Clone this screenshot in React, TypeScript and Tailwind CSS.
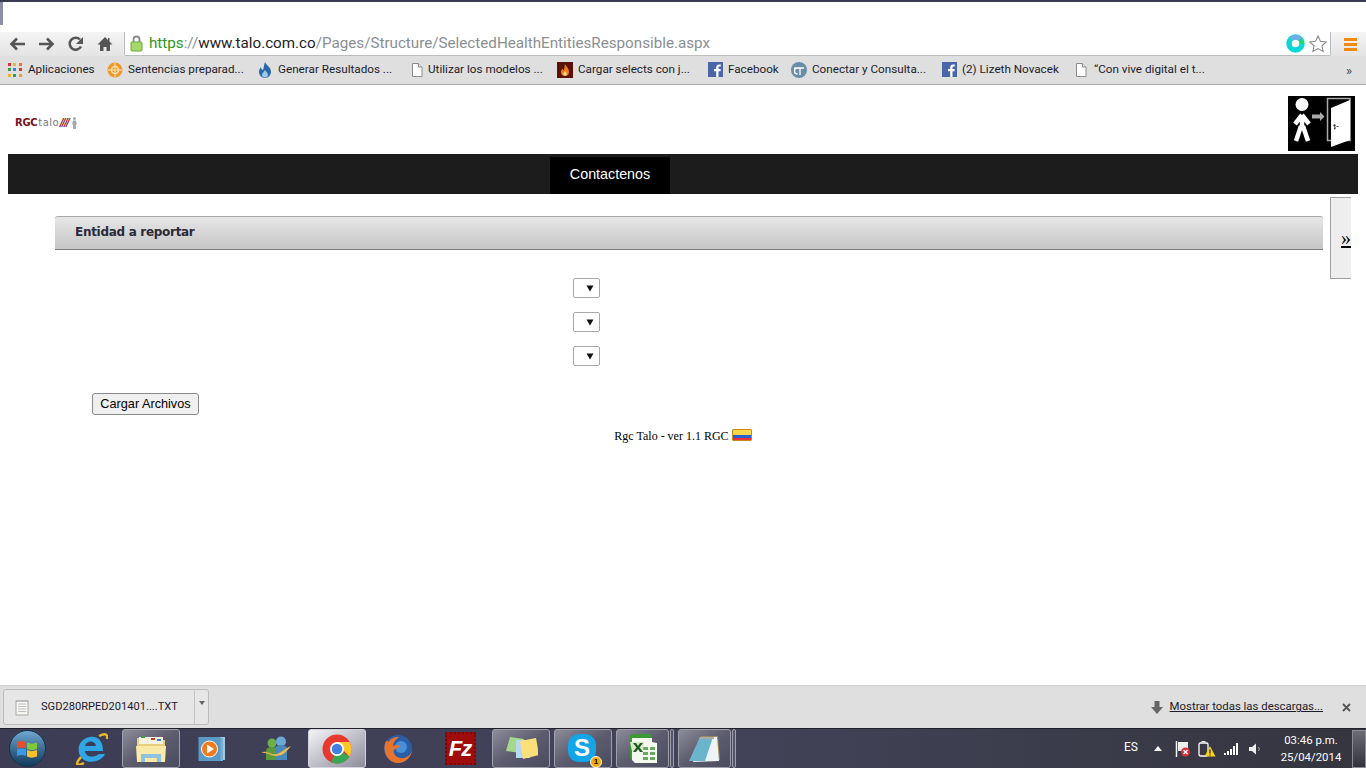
import React from "react";

const uiFont = "font-['Roboto','Noto_Sans',sans-serif]";

const PageIcon = () => (
  <svg width="14" height="16" viewBox="0 0 14 16">
    <path d="M2.5 1.5h6l3.5 3.5v9.500h-9.500z" fill="#fff" stroke="#8a8a8a" />
    <path d="M8.500 1.500v3.500h3.500" fill="#eee" stroke="#8a8a8a" />
  </svg>
);

const FbIcon = () => (
  <svg width="15" height="15" viewBox="0 0 15 15">
    <rect width="15" height="15" fill="#4a66a8" />
    <path d="M10.500 15V9.300h2l.3-2.300h-2.300V5.600c0-.7.3-1.100 1.100-1.100h1.200V2.500c-.4 0-1-.1-1.700-.1-1.800 0-2.900 1.100-2.900 3V7H6v2.300h2.200V15z" fill="#fff" />
  </svg>
);

const AppsIcon = () => {
  const colors = ["#d9352c", "#f1b32b", "#e8742c", "#3a9b4b", "#3a7de0", "#d9352c", "#f1b32b", "#3a9b4b", "#e8a02c"];
  return (
    <div className="grid grid-cols-3 gap-[2px] w-[14px] h-[14px]">
      {colors.map((c, i) => (
        <span key={i} className="w-[3px] h-[3px]" style={{ backgroundColor: c }} />
      ))}
    </div>
  );
};

const bookmarks = [
  { w: "w-[99px]", tx: "", label: "Aplicaciones", icon: <AppsIcon /> },
  {
    w: "w-[151px]",
    tx: "ml-[1px]",
    label: "Sentencias preparad...",
    icon: (
      <svg width="16" height="16" viewBox="0 0 16 16">
        <circle cx="8" cy="8" r="7.500" fill="#f0982a" />
        <circle cx="8" cy="8" r="3.500" fill="none" stroke="#fde3b0" strokeWidth="1.500" />
        <path d="M8 1v14M1 8h14" stroke="#fde3b0" />
      </svg>
    ),
  },
  {
    w: "w-[152px]",
    tx: "",
    label: "Generar Resultados ...",
    icon: (
      <svg width="14" height="16" viewBox="0 0 14 16">
        <path d="M7 0c1 3 6 5 6 10a6 6 0 0 1-12 0c0-2 1-4 2-5 0 2 1 3 2 3 1-3 1-5 2-8z" fill="#2a66a8" />
        <path d="M7 8c1 2 3 3 3 4.500a3 3 0 0 1-6 0C4 11 6 10 7 8z" fill="#9cc8ea" />
      </svg>
    ),
  },
  { w: "w-[147px]", tx: "ml-[-2px]", label: "Utilizar los modelos ...", icon: <PageIcon /> },
  {
    w: "w-[151px]",
    tx: "ml-[1px]",
    label: "Cargar selects con j...",
    icon: (
      <svg width="16" height="16" viewBox="0 0 16 16">
        <rect width="16" height="16" fill="#5a1208" />
        <path d="M8 2c.5 2 4 4 4 8a4 4 0 0 1-8 0c0-1.500.7-2.500 1.500-3.500C5.700 8 6.500 8.500 7 8c.5-2 .5-4 1-6z" fill="#f07a1e" />
        <path d="M8 9c.5 1 1.800 1.500 1.800 3a1.800 1.800 0 0 1-3.600 0c0-1 1.300-1.800 1.800-3z" fill="#fbd78a" />
      </svg>
    ),
  },
  { w: "w-[83px]", tx: "", label: "Facebook", icon: <FbIcon /> },
  {
    w: "w-[151px]",
    tx: "ml-[1px]",
    label: "Conectar y Consulta...",
    icon: (
      <svg width="16" height="16" viewBox="0 0 16 16">
        <circle cx="8" cy="8" r="8" fill="#6a8ea8" />
        <path d="M3 6h10M9 6v7M6.500 6a3 3 0 1 0 0 6" stroke="#fff" strokeWidth="1.300" fill="none" />
      </svg>
    ),
  },
  { w: "w-[132px]", tx: "", label: "(2) Lizeth Novacek", icon: <FbIcon /> },
  { w: "w-[150px]", tx: "", label: "“Con vive digital el t...", icon: <PageIcon /> },
];

const ExitSign = () => (
  <svg width="67" height="55" viewBox="0 0 67 55">
    <rect width="67" height="55" fill="#000" />
    <circle cx="14" cy="8.500" r="6.500" fill="#fff" />
    <path d="M14 19v12M14 19l-7 9M14 19l7 9M13 30L8 45M15 30l5 15" stroke="#fff" strokeWidth="4.500" fill="none" />
    <path d="M24 18.500h8V16l4.500 4.500L32 25v-2.500h-8z" fill="#aaa" />
    <rect x="39.500" y="2.500" width="22.500" height="42" fill="none" stroke="#aaa" strokeWidth="1.500" />
    <path d="M43 12l19-8v40l-19 7z" fill="#fff" />
    <path d="M46 28l2 1-1 2 1 1-1.500 2-.8-2 1-1-1.500-1zM48.500 30h2v1h-2z" fill="#444" />
  </svg>
);

const FlagIcon = () => (
  <div className="w-[20px] h-[12px] flex flex-col border border-[#c58a18] rounded-[1px] overflow-hidden">
    <div className="h-[5px] bg-[#f8d64e]" />
    <div className="h-[3px] bg-[#2a5fd0]" />
    <div className="h-[2px] bg-[#e8343a]" />
  </div>
);

const Select = () => (
  <div className="w-[27px] h-[20px] bg-white border border-[#a9a9a9] rounded-[2px] flex items-center justify-end pr-[5px]">
    <svg width="8" height="8" viewBox="0 0 8 8">
      <path d="M0.500 1.500h7L4 7.500z" fill="#111" />
    </svg>
  </div>
);

const tasks = [
  {
    w: "w-[62px]",
    icon: (
      <svg width="34" height="32" viewBox="0 0 34 32">
        <path d="M28 18H11c.3 5 7 8 14 3h6c-4 9-22 12-26-1-2-8 3-15 11-16 7-1 13 3 13 14zM11 13h11c-.5-6-10-6-11 0z" fill="#2fa6e6" />
        <path d="M7 24C1 31 2 34 10 30M25 3c6-3 9-2 8 3" fill="none" stroke="#e8b62a" strokeWidth="2.500" />
      </svg>
    ),
  },
  {
    w: "w-[58px]",
    pinned: true,
    icon: (
      <svg width="32" height="30" viewBox="0 0 32 30">
        <path d="M2 4h7l2 2h19v22H2z" fill="#e8cf82" />
        <path d="M4 3h24v7H4z" fill="#f7f3e0" />
        <rect x="6" y="2" width="4" height="2" fill="#3a9b4b" />
        <rect x="16" y="4" width="4" height="2" fill="#c8402a" />
        <rect x="22" y="5" width="4" height="2" fill="#3a7de0" />
        <path d="M1 12h30l-1 16H2z" fill="#fbe9a8" />
        <path d="M6 28v-8h20v8h-4v-4H10v4z" fill="#8cc4e0" />
      </svg>
    ),
  },
  {
    w: "w-[64px]",
    icon: (
      <svg width="28" height="26" viewBox="0 0 28 26">
        <rect x="5" y="1" width="22" height="23" fill="#a5c8e0" />
        <rect x="3" y="2" width="22" height="23" fill="#78aed2" />
        <rect x="0.500" y="1" width="22" height="24" fill="#5a9ac6" />
        <circle cx="11.500" cy="13" r="8" fill="#f07a1e" stroke="#fff" />
        <path d="M9 8.500l7 4.500-7 4.500z" fill="#fff" />
      </svg>
    ),
  },
  {
    w: "w-[64px]",
    icon: (
      <svg width="32" height="26" viewBox="0 0 32 26">
        <circle cx="12" cy="7" r="4.500" fill="#6cb04a" />
        <path d="M6 24V15c0-3 3-4 6-4s5 1 5 4v9z" fill="#5a9a3c" />
        <circle cx="21" cy="5.500" r="5" fill="#6aa8d8" />
        <path d="M15 24V13c0-3 3-4 6-4s6 1 6 4v11z" fill="#4a88c0" />
        <path d="M1 17c6-4 10 3 16 1 5-2 9-6 14-8-4 5-8 10-15 10-5 0-9-4-15-3z" fill="#f0b84a" />
      </svg>
    ),
  },
  {
    w: "w-[58px]",
    active: true,
    icon: (
      <svg width="30" height="30" viewBox="0 0 30 30">
        <circle cx="15" cy="15" r="14.500" fill="#e8392e" />
        <path d="M15 15L27.500 22.500A14.500 14.500 0 0 1 9 28.200z" fill="#3aa655" />
        <path d="M15 8h12.500a14.500 14.500 0 0 1 0 14.500L20 15z" fill="#fbc62c" />
        <circle cx="15" cy="15" r="7" fill="#fff" />
        <circle cx="15" cy="15" r="5.300" fill="#3f7fe0" />
      </svg>
    ),
  },
  {
    w: "w-[64px]",
    icon: (
      <svg width="30" height="30" viewBox="0 0 30 30">
        <circle cx="15" cy="15" r="14" fill="#2a5fa8" />
        <circle cx="18" cy="13" r="6" fill="#4a8ed8" />
        <path d="M3 7C-2 18 6 30 16 29c7-.5 12-6 13-12-2 5-7 8-12 7-5-1-7-5-6-8 1-2 4-2 6-3-1-3-5-2-7-1 0-3 2-6 6-9C10 3 7 5 6 8 5 7 4 7 3 7z" fill="#e8742c" />
      </svg>
    ),
  },
  {
    w: "w-[60px]",
    icon: (
      <div className="w-[31px] h-[33px] bg-[#a00c0c] border-2 border-dotted border-[#7a0808] flex items-center justify-center">
        <span className="text-white font-['Liberation_Sans',sans-serif] font-bold italic text-[22px] leading-none tracking-[-1px]">Fz</span>
      </div>
    ),
  },
  {
    w: "w-[58px] ml-[2px]",
    pinned: true,
    icon: (
      <svg width="34" height="28" viewBox="0 0 34 28">
        <path d="M6 2l14 2-3 14L2 16z" fill="#a5d98a" />
        <path d="M12 5h14v18H12z" fill="#b8d8f2" />
        <path d="M16 6l16-3 3 17-16 4z" fill="#fbe07a" />
      </svg>
    ),
  },
  {
    w: "w-[58px] ml-[4px]",
    pinned: true,
    icon: (
      <div className="relative w-[30px] h-[30px]">
        <div className="w-[28px] h-[28px] rounded-[11px] bg-[#12a5e8] flex items-center justify-center text-white font-['Liberation_Sans',sans-serif] font-bold text-[24px] leading-none">S</div>
        <div className="absolute right-[-4px] bottom-[-4px] w-[12px] h-[12px] rounded-full bg-[#f8a808] border border-white flex items-center justify-center text-[8px] leading-none font-bold text-black font-['Liberation_Sans',sans-serif]">1</div>
      </div>
    ),
  },
  {
    w: "w-[53px] ml-[4px]",
    pinned: true,
    stacked: true,
    icon: (
      <svg width="32" height="32" viewBox="0 0 32 32">
        <path d="M3 4a3 3 0 0 1 3-3h18v6H10v20H6c-2 0-3-1-3-3z" fill="#3a9a34" />
        <path d="M5 5h20v4l5 1v20H8l-3-3z" fill="#f4f8ee" />
        <path d="M16 14h5v3h-5zM23 14h5v3h-5zM16 19h5v3h-5zM23 19h5v3h-5zM16 24h5v3h-5zM23 24h5v3h-5z" fill="#6aa860" />
        <path d="M3 9h14l-1 9H5z" fill="#d8e8c8" />
        <path d="M6 10h3l2 3 2-3h3l-3.500 4.500L16 19h-3l-2-3-2 3H6l3.500-4.500z" fill="#1f5a20" />
      </svg>
    ),
  },
  {
    w: "w-[53px] ml-[4px]",
    pinned: true,
    stacked: true,
    icon: (
      <svg width="32" height="30" viewBox="0 0 32 30">
        <path d="M12 2h17l2 24H8z" fill="#9a8a5a" />
        <path d="M11 3h17l2 24-26 1z" fill="#eef4f6" />
        <path d="M11 3h13l-8 24H0z" fill="#6ab4cc" />
        <path d="M11 3h14v2H11z" fill="#aaa" />
      </svg>
    ),
  },
];

const TaskButton = ({ t }: { t: (typeof tasks)[number] }) => {
  const box = t.active
    ? "border border-[#d4d4dc] bg-gradient-to-br from-[#f4f4f6] via-[#c0c0ca] to-[#8c8c9c]"
    : t.pinned
      ? "border border-[#a0a0ac] bg-gradient-to-br from-[#8c8c9a] via-[#5c5c6e] to-[#4c4c60]"
      : "";
  return (
    <>
      <div className={`${t.w} h-[39px] flex items-center justify-center rounded-[3px] shrink-0 ${box}`}>
        {t.icon}
      </div>
      {t.stacked && <div className="w-[4px] h-[39px] ml-[1px] shrink-0 border border-[#a0a0ac] rounded-[2px] bg-[#55556a]" />}
    </>
  );
};

export default function App() {
  return (
    <div className="w-[1366px] h-[768px] overflow-hidden bg-white flex flex-col">
      {/* browser chrome */}
      <div className="h-[2px] bg-[#3a3a52] shrink-0" />
      <div className="h-[30px] bg-white shrink-0">
        <div className="w-[3px] h-[23px] bg-[#8d8da8]" />
      </div>
      <div className="h-[24px] shrink-0 bg-gradient-to-b from-[#f4f4f4] to-[#e4e4e4] flex items-center">
        <div className="w-[124px] flex items-center pl-[9px] gap-[12px] text-[#555]">
          <svg width="17" height="14" viewBox="0 0 17 14">
            <path d="M16 7H3M8 1.500 2.500 7 8 12.500" fill="none" stroke="#555" strokeWidth="2.600" />
          </svg>
          <svg width="17" height="14" viewBox="0 0 17 14">
            <path d="M1 7h13M9 1.500 14.500 7 9 12.500" fill="none" stroke="#555" strokeWidth="2.600" />
          </svg>
          <svg width="16" height="16" viewBox="0 0 16 16" className="ml-[1px]">
            <path d="M13 10.500A6 6 0 1 1 12 3.500" fill="none" stroke="#555" strokeWidth="2.500" />
            <path d="M15 1v7H8z" fill="#555" />
          </svg>
          <svg width="16" height="16" viewBox="0 0 16 16" className="ml-[1px]">
            <path d="M8 1 0.500 8.500H3V15h3.500v-4h3v4H13V8.500h2.500L12.500 5.500V2H11v2z" fill="#555" />
          </svg>
        </div>
        <div className="w-[1207px] h-[24px] bg-white border-b border-l border-r border-[#bdbdbd] rounded-bl-[2px] rounded-br-[2px] flex items-center pl-[5px] pr-[3px]">
          <svg width="13" height="17" viewBox="0 0 13 17" className="shrink-0">
            <path d="M3.500 7V4.500a3 3 0 0 1 6 0V7" fill="none" stroke="#8a8a8a" strokeWidth="1.800" />
            <rect x="1" y="7" width="11" height="9" rx="1" fill="#a6d96a" stroke="#6aa83a" />
          </svg>
          <div className={`ml-[6px] ${uiFont} text-[15.200px] leading-none whitespace-nowrap text-[#8a8f94] flex-1`}>
            <span className="text-[#2a9a1e]">https</span>
            <span>://</span>
            <span className="text-[#222]">www.talo.com.co</span>
            <span>/Pages/Structure/SelectedHealthEntitiesResponsible.aspx</span>
          </div>
          <svg width="19" height="19" viewBox="0 0 19 19" className="shrink-0">
            <circle cx="9.500" cy="9.500" r="6.500" fill="none" stroke="#0ad8d8" strokeWidth="5.500" />
            <path d="M4 3a9 9 0 0 1 12 1l-3 3a5 5 0 0 0-6-.5z" fill="#7ba8e8" />
            <path d="M15 4a9 9 0 0 1 3 6h-3.500a5 5 0 0 0-1.500-3z" fill="#22d868" />
          </svg>
          <svg width="18" height="18" viewBox="0 0 18 18" className="ml-[4px] shrink-0">
            <path d="M9 1l2.400 5.300 5.800.6-4.300 3.900 1.200 5.700L9 13.600l-5.100 2.900 1.200-5.700L.8 6.900l5.800-.6z" fill="#fff" stroke="#8a8a8a" strokeWidth="1.100" />
          </svg>
        </div>
        <div className="w-[35px] flex flex-col items-end pr-[9px] gap-[2px]">
          <div className="w-[13px] h-[3px] bg-[#f08a12]" />
          <div className="w-[13px] h-[3px] bg-[#f08a12]" />
          <div className="w-[13px] h-[3px] bg-[#f08a12]" />
        </div>
      </div>
      <div className={`h-[29px] shrink-0 bg-[#dfdfdf] border-b border-[#aaaaaa] flex items-center pl-[8px] ${uiFont} text-[11.700px] text-[#1c1c2a]`}>
        {bookmarks.map((b) => (
          <div key={b.label} className={`${b.w} flex items-center shrink-0`}>
            <div className="w-[20px] shrink-0 flex items-center">{b.icon}</div>
            <span className={`whitespace-nowrap ${b.tx}`}>{b.label}</span>
          </div>
        ))}
        <div className="ml-[122px] text-[13px] leading-none text-[#444]">»</div>
      </div>

      {/* page */}
      <div className="relative flex-1 bg-white overflow-hidden">
        <div className="h-[69px] flex items-start justify-between pl-[15px] pr-[11px] pt-[11px]">
          <div className="mt-[21px] flex items-center font-['DejaVu_Sans',sans-serif] text-[10px] leading-none">
            <span className="font-bold text-[#7a1020] tracking-[-0.300px]">RGC</span>
            <span className="text-[#777] ml-[1px] tracking-[0.400px]">talo</span>
            <span className="font-bold italic text-[#8a1020] tracking-[-1.500px] ml-[1px]">////</span>
            <svg width="5" height="12" viewBox="0 0 5 12" className="ml-[3px]">
              <circle cx="2.500" cy="1.500" r="1.500" fill="#aaa" />
              <path d="M1 3.500h3l1 4H4v4.500H1V7.500H0z" fill="#aaa" />
            </svg>
          </div>
          <ExitSign />
        </div>

        <div className="mx-[8px] h-[40px] bg-[#1c1c1c] pl-[542px] pt-[3px]">
          <div className="w-[120px] h-[37px] pb-[2px] bg-black text-white font-['Liberation_Sans',sans-serif] text-[14.300px] flex items-center justify-center">
            Contactenos
          </div>
        </div>

        <div className="ml-[55px] mt-[22px] w-[1268px] h-[34px] flex items-center pl-[20px] pb-[2px] rounded-tl-[3px] rounded-tr-[3px] bg-gradient-to-b from-[#e6e6e6] to-[#c6c6c6] border-t border-[#a8a8a8] border-b border-b-[#7c7c7c] font-['DejaVu_Sans',sans-serif] font-bold text-[12px] tracking-[-0.300px] text-[#2a2a3a]">
          Entidad a reportar
        </div>

        <div className="mt-[28px] pl-[573px] flex flex-col gap-[14px]">
          <Select />
          <Select />
          <Select />
        </div>

        <button className="block ml-[92px] mt-[27px] w-[107px] h-[22px] bg-[#f0f0f0] border border-[#8a8a8a] rounded-[3px] font-['Liberation_Sans',sans-serif] text-[12.700px] leading-none text-black">
          Cargar Archivos
        </button>

        <div className="mt-[14px] flex items-start justify-center gap-[3px] font-['Liberation_Serif',serif] text-[12px] leading-[14px] text-black">
          <span>Rgc Talo - ver 1.1 RGC</span>
          <FlagIcon />
        </div>

        {/* side tab over the page */}
        <div className="absolute left-[1330px] top-[112px] w-[21px] h-[82px] bg-[#eeeeee] border-l border-t border-b border-[#a0a0a0] flex items-center justify-end font-['Liberation_Serif',serif] text-[20px] text-black underline decoration-2">
          »
        </div>
      </div>

      {/* downloads bar */}
      <div className={`h-[43px] shrink-0 bg-[#dfdfdf] border-t border-[#cfcfcf] flex items-center pl-[3px] pr-[15px] ${uiFont} text-[11.400px] text-[#1c1c2a]`}>
        <div className="w-[206px] h-[36px] shrink-0 flex border border-[#bcbcbc] rounded-[3px] bg-[#e6e6e6]">
          <div className="w-[191px] flex items-center pl-[11px] border-r border-[#c4c4c4]">
            <svg width="14" height="17" viewBox="0 0 14 17">
              <rect x="1" y="2" width="12" height="14" fill="#f6f6f2" stroke="#a8a8a8" />
              <path d="M3 5h8M3 7.500h8M3 10h8M3 12.500h8" stroke="#c0c0c0" />
              <path d="M1.500 2h11" stroke="#888" strokeDasharray="1 1" />
            </svg>
            <span className="ml-[12px] whitespace-nowrap text-[11.100px]">SGD280RPED201401....TXT</span>
          </div>
          <div className="flex-1 flex justify-center pt-[11px]">
            <svg width="6" height="4" viewBox="0 0 6 4">
              <path d="M0 0h6L3 4z" fill="#666" />
            </svg>
          </div>
        </div>
        <svg width="12" height="13" viewBox="0 0 12 13" className="ml-auto">
          <path d="M3.500 0h5v6H12l-6 7-6-7h3.500z" fill="#666" />
        </svg>
        <span className="ml-[7px] underline whitespace-nowrap">Mostrar todas las descargas...</span>
        <svg width="9" height="9" viewBox="0 0 9 9" className="ml-[19px]">
          <path d="M1 1l7 7M8 1 1 8" stroke="#555" strokeWidth="1.800" />
        </svg>
      </div>

      {/* windows taskbar */}
      <div className="h-[40px] shrink-0 bg-gradient-to-r from-[#3c3d54] via-[#43445a] to-[#35353f] border-t border-[#20202c] flex items-center text-white">
        <div className="w-[60px] shrink-0 flex justify-center pr-[6px]">
          <div className="w-[37px] h-[37px] rounded-full bg-gradient-to-b from-[#6fa8d0] to-[#123a5c] border border-[#16334a] flex items-center justify-center">
            <svg width="22" height="20" viewBox="0 0 22 20">
              <path d="M1 3c3-1.500 6-1.500 9 0v6.500C7 8 4 8 1 9.500z" fill="#e8502a" />
              <path d="M11 3.500c3 1.500 6 1.500 10 0V10c-4 1.500-7 1.500-10 0z" fill="#7ec83a" />
              <path d="M1 10.500c3-1.500 6-1.500 9 0V17c-3-1.500-6-1.500-9 0z" fill="#3a9ae8" />
              <path d="M11 11c3 1.500 6 1.500 10 0v6.500c-4 1.500-7 1.500-10 0z" fill="#f8c02a" />
            </svg>
          </div>
        </div>
        {tasks.map((t, i) => (
          <TaskButton key={i} t={t} />
        ))}
        <div className="flex-1" />
        <div className={`flex items-center ${uiFont} text-[12px] leading-none`}>
          <span className="w-[30px] pb-[4px]">ES</span>
          <svg width="8" height="5" viewBox="0 0 8 5" className="shrink-0">
            <path d="M4 0l4 5H0z" fill="#fff" />
          </svg>
          <svg width="16" height="16" viewBox="0 0 16 16" className="ml-[13px]">
            <path d="M1.500 0v16" stroke="#fff" strokeWidth="1.500" />
            <path d="M3 1h10v9H3z" fill="#eee" />
            <circle cx="10.500" cy="11" r="4.500" fill="#d8303a" />
            <path d="M8.500 9l4 4M12.500 9l-4 4" stroke="#fff" strokeWidth="1.300" />
          </svg>
          <svg width="18" height="16" viewBox="0 0 18 16" className="ml-[7px]">
            <rect x="1" y="2" width="9" height="13" rx="1.500" fill="none" stroke="#fff" strokeWidth="1.300" />
            <path d="M3.500 0.500h4" stroke="#fff" strokeWidth="1.300" />
            <path d="M12 5l5.500 10.500h-11z" fill="#f8d020" />
            <path d="M12 8.500v4M12 13.500v1" stroke="#222" strokeWidth="1.200" />
          </svg>
          <svg width="16" height="12" viewBox="0 0 16 12" className="ml-[7px]">
            <path d="M1 10h2v2H1zM4 8h2v4H4zM7 6h2v6H7zM10 3h2v9h-2zM13 0h2v12h-2z" fill="#fff" />
          </svg>
          <svg width="14" height="14" viewBox="0 0 14 14" className="ml-[9px]">
            <path d="M1 5h3l4-3.500v11L4 9H1z" fill="#eee" />
            <path d="M10.500 5a3 3 0 0 1 0 4" fill="none" stroke="#aaa" />
          </svg>
          <div className="ml-[17px] w-[64px] text-center text-[11.400px] leading-[17px] whitespace-nowrap">
            <div>03:46 p.m.</div>
            <div>25/04/2014</div>
          </div>
          <div className="ml-[9px] w-[14px] h-[38px] border border-[#8a8a92] bg-gradient-to-b from-[#6c6c74] to-[#33333c]" />
        </div>
      </div>
    </div>
  );
}
